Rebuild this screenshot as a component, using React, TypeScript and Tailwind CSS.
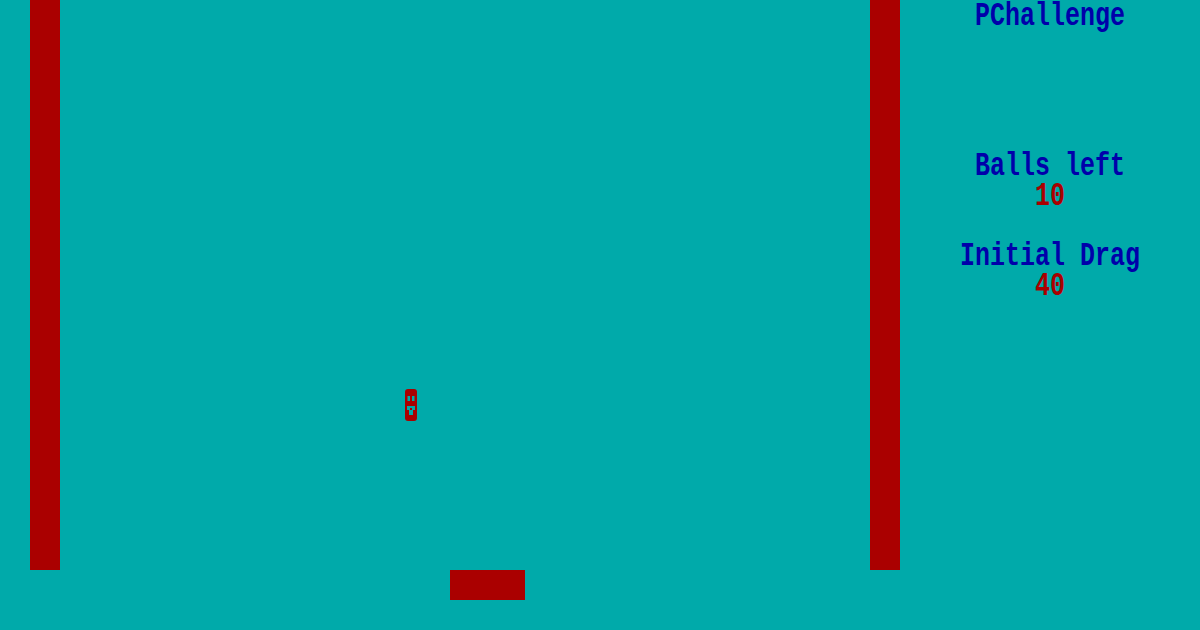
function Ball() {
  return (
    <svg width="12" height="32" viewBox="0 0 12 32" className="block">
      <rect x="0" y="0" width="12" height="32" rx="3" fill="#AA0000" />
      <rect x="2.5" y="7" width="2.5" height="5" fill="#00AAAA" />
      <rect x="7" y="7" width="2.5" height="5" fill="#00AAAA" />
      <path d="M2 17 H10 V21 H8 V26 H4 V21 H2 Z" fill="#00AAAA" />
      <rect x="5" y="19" width="2" height="2" fill="#AA0000" />
    </svg>
  );
}

function Line({ children, color }: { children: React.ReactNode; color: string }) {
  return (
    <div className={`h-[30px] leading-[30px] translate-y-[2px] scale-y-[1.3] origin-center ${color}`}>{children}</div>
  );
}

export default function App() {
  return (
    <div className="w-[1200px] h-[630px] bg-[#00AAAA] overflow-hidden flex flex-col font-['Liberation_Mono','DejaVu_Sans_Mono',monospace] font-bold text-[25px]">
      {/* playfield row */}
      <div className="flex h-[570px]">
        <div className="w-[30px]" />
        <div className="w-[30px] bg-[#AA0000]" />
        <div className="w-[810px] relative">
          <div className="absolute left-[345px] top-[389px]">
            <Ball />
          </div>
        </div>
        <div className="w-[30px] bg-[#AA0000]" />

        {/* sidebar */}
        <div className="w-[300px] flex flex-col text-center">
          <Line color="text-[#0000AA]">PChallenge</Line>
          <div className="h-[120px]" />
          <Line color="text-[#0000AA]">Balls left</Line>
          <Line color="text-[#AA0000]">10</Line>
          <div className="h-[30px]" />
          <Line color="text-[#0000AA]">Initial Drag</Line>
          <Line color="text-[#AA0000]">40</Line>
        </div>
      </div>

      {/* paddle row */}
      <div className="h-[30px] flex">
        <div className="ml-[450px] w-[75px] bg-[#AA0000]" />
      </div>
    </div>
  );
}
